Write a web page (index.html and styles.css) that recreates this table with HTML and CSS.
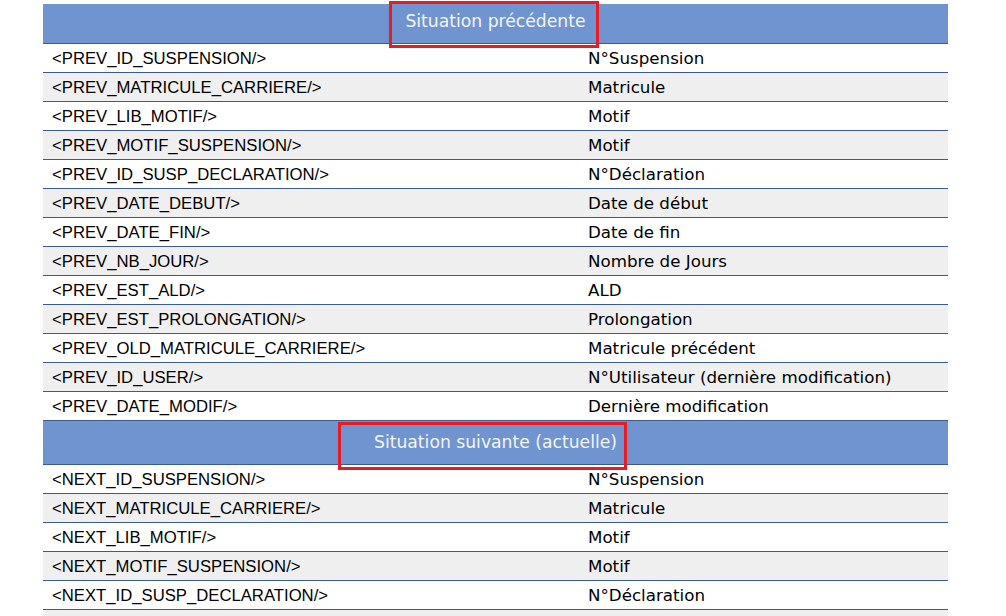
FILE: index.html
```html
<!DOCTYPE html>
<html lang="fr">
<head>
<meta charset="utf-8">
<link rel="stylesheet" href="styles.css">
</head>
<body>
<div class="sheet">
  <div class="section section-first">
    <div class="hdr">Situation précédente<span class="mark mark-1"></span></div>
    <div class="row"><div class="c1">&lt;PREV_ID_SUSPENSION/&gt;</div><div class="c2">N°Suspension</div></div>
    <div class="row"><div class="c1">&lt;PREV_MATRICULE_CARRIERE/&gt;</div><div class="c2">Matricule</div></div>
    <div class="row"><div class="c1">&lt;PREV_LIB_MOTIF/&gt;</div><div class="c2">Motif</div></div>
    <div class="row"><div class="c1">&lt;PREV_MOTIF_SUSPENSION/&gt;</div><div class="c2">Motif</div></div>
    <div class="row"><div class="c1">&lt;PREV_ID_SUSP_DECLARATION/&gt;</div><div class="c2">N°Déclaration</div></div>
    <div class="row"><div class="c1">&lt;PREV_DATE_DEBUT/&gt;</div><div class="c2">Date de début</div></div>
    <div class="row"><div class="c1">&lt;PREV_DATE_FIN/&gt;</div><div class="c2">Date de fin</div></div>
    <div class="row"><div class="c1">&lt;PREV_NB_JOUR/&gt;</div><div class="c2">Nombre de Jours</div></div>
    <div class="row"><div class="c1">&lt;PREV_EST_ALD/&gt;</div><div class="c2">ALD</div></div>
    <div class="row"><div class="c1">&lt;PREV_EST_PROLONGATION/&gt;</div><div class="c2">Prolongation</div></div>
    <div class="row"><div class="c1">&lt;PREV_OLD_MATRICULE_CARRIERE/&gt;</div><div class="c2">Matricule précédent</div></div>
    <div class="row"><div class="c1">&lt;PREV_ID_USER/&gt;</div><div class="c2">N°Utilisateur (dernière modification)</div></div>
    <div class="row"><div class="c1">&lt;PREV_DATE_MODIF/&gt;</div><div class="c2">Dernière modification</div></div>
  </div>
  <div class="section section-second">
    <div class="hdr">Situation suivante (actuelle)<span class="mark mark-2"></span></div>
    <div class="row"><div class="c1">&lt;NEXT_ID_SUSPENSION/&gt;</div><div class="c2">N°Suspension</div></div>
    <div class="row"><div class="c1">&lt;NEXT_MATRICULE_CARRIERE/&gt;</div><div class="c2">Matricule</div></div>
    <div class="row"><div class="c1">&lt;NEXT_LIB_MOTIF/&gt;</div><div class="c2">Motif</div></div>
    <div class="row"><div class="c1">&lt;NEXT_MOTIF_SUSPENSION/&gt;</div><div class="c2">Motif</div></div>
    <div class="row"><div class="c1">&lt;NEXT_ID_SUSP_DECLARATION/&gt;</div><div class="c2">N°Déclaration</div></div>
    <div class="row row-empty"></div>
  </div>
</div>
</body>
</html>
```

FILE: styles.css
```css
html, body {
  margin: 0;
  padding: 0;
  background: #ffffff;
  overflow: hidden;
}
body {
  font-family: "Liberation Sans", Arial, sans-serif;
  font-size: 16.7px;
  color: #000000;
}
.sheet {
  margin: 4px 0 0 43px;
  width: 905px;
}
.hdr {
  position: relative;
  background: #7094cf;
  color: #f4f6fb;
  font-family: "DejaVu Sans", sans-serif;
  font-size: 17.2px;
  text-align: center;
  border-bottom: 1px solid #3b5b8d;
  box-sizing: border-box;
}
.section-first .hdr {
  height: 40px;
  line-height: 34px;
}
.section-second .hdr {
  height: 44px;
  line-height: 42px;
}
.row {
  display: grid;
  grid-template-columns: 536px 1fr;
  height: 29px;
  box-sizing: border-box;
  border-bottom: 1px solid #3b5b8d;
  line-height: 28px;
}
.section .row:nth-child(odd) {
  background: #efefef;
}
.c1 {
  padding-left: 9px;
  padding-top: 1px;
  white-space: nowrap;
}
.c2 {
  padding-left: 9px;
  white-space: nowrap;
  font-family: "DejaVu Sans", sans-serif;
  font-size: 16.7px;
}
.row-empty {
  border-bottom: none;
}
.mark {
  position: absolute;
  border: 3px solid #e51c24;
  box-sizing: border-box;
  pointer-events: none;
}
.mark-1 {
  left: 346px;
  top: -3px;
  width: 210px;
  height: 47px;
}
.mark-2 {
  left: 295px;
  top: 1px;
  width: 289px;
  height: 48px;
}
```
